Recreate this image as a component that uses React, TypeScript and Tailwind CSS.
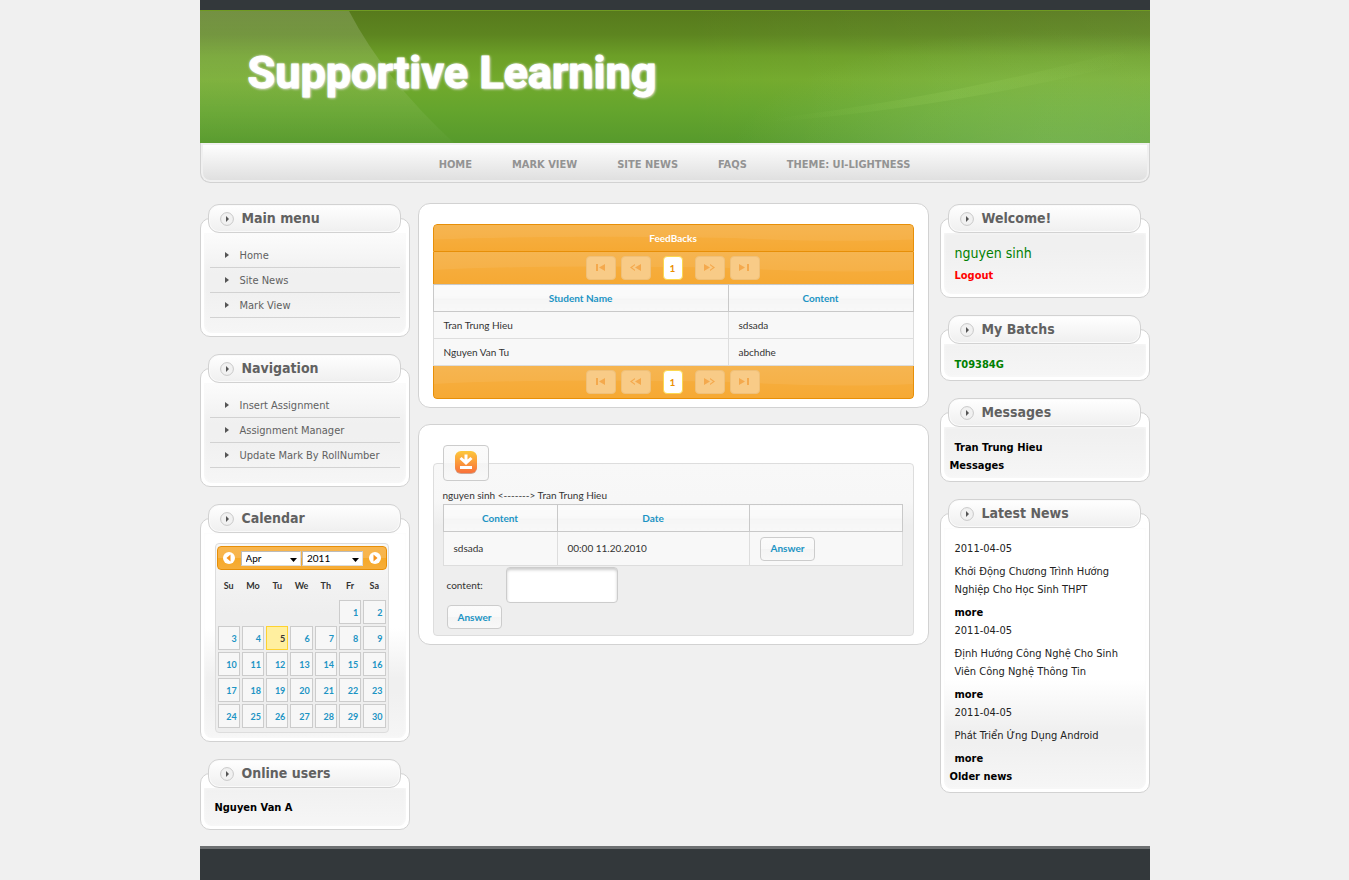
import type { ReactNode } from "react";

const navItems = ["HOME", "MARK VIEW", "SITE NEWS", "FAQS", "THEME: UI-LIGHTNESS"];
const mainMenu = ["Home", "Site News", "Mark View"];
const navigation = ["Insert Assignment", "Assignment Manager", "Update Mark By RollNumber"];
const weekdays = ["Su", "Mo", "Tu", "We", "Th", "Fr", "Sa"];
const weeks = [0, 1, 2, 3, 4].map((w) => weekdays.map((_, d) => w * 7 + d - 4));
const feedbacks = [
  { student: "Tran Trung Hieu", content: "sdsada" },
  { student: "Nguyen Van Tu", content: "abchdhe" },
];
const news = [
  { date: "2011-04-05", title: "Khởi Động Chương Trình Hướng Nghiệp Cho Học Sinh THPT" },
  { date: "2011-04-05", title: "Định Hướng Công Nghệ Cho Sinh Viên Công Nghệ Thông Tin" },
  { date: "2011-04-05", title: "Phát Triển Ứng Dụng Android" },
];

function Panel({ title, className = "", children }: { title: string; className?: string; children: ReactNode }) {
  return (
    <section>
      <h2 className="relative z-10 ml-2 mr-[9px] flex h-[29px] items-center rounded-[11px] border border-[#d2d2d2] bg-linear-to-b from-white to-[#efefef] pl-[11px] text-[14px] font-bold text-[#616161] shadow-[inset_0_0_0_1px_#fafafa]">
        <svg width="14" height="14" viewBox="0 0 14 14" className="mr-2 shrink-0" aria-hidden="true">
          <circle cx="7" cy="7" r="6.4" fill="#f1f1f1" stroke="#c8c8c8" />
          <path d="M6 4l3 3-3 3z" fill="#555" />
        </svg>
        {title}
      </h2>
      <div className="-mt-[15px] rounded-[10px] border border-[#d2d2d2] bg-white px-[3px] pt-[14px] pb-[3px]">
        <div className={"rounded-b-lg bg-[linear-gradient(to_top,#f6f6f6_0,#f0f0f0_45px,#f0f0f0_60px,#ffffff_110px)] text-[11px] leading-[18px] shadow-[inset_0_0_3px_#fafafa] " + className}>
          {children}
        </div>
      </div>
    </section>
  );
}

function Menu({ items }: { items: string[] }) {
  return (
    <ul className="mx-[6px]">
      {items.map((item) => (
        <li key={item} className="flex h-[25px] items-center border-b border-[#d2d2d2] pt-[2px] pl-[15px]">
          <svg width="4" height="6" viewBox="0 0 4 6" className="mr-[11px] -mt-[2px]" aria-hidden="true">
            <path d="M0 0l4 3-4 3z" fill="#555" />
          </svg>
          <a href="#" className="text-[#616161]">{item}</a>
        </li>
      ))}
    </ul>
  );
}

function CalendarArrow({ label, d }: { label: string; d: string }) {
  return (
    <button type="button" aria-label={label} className="shrink-0">
      <svg width="12" height="12" viewBox="0 0 12 12">
        <circle cx="6" cy="6" r="6" fill="#fff" />
        <path d={d} fill="#f6931f" />
      </svg>
    </button>
  );
}

function CalendarSelect({ label, value }: { label: string; value: string }) {
  return (
    <span className="relative flex min-w-0 flex-1">
      <select aria-label={label} defaultValue={value} className="h-[15px] w-full appearance-none border border-[#bbb] border-r-[#ddd] border-b-[#ddd] bg-white pl-1 text-[10px] leading-[13px] text-black">
        <option>{value}</option>
      </select>
      <svg width="7" height="4" viewBox="0 0 7 4" className="pointer-events-none absolute right-1 bottom-1" aria-hidden="true">
        <path d="M0 0h7L3.500 4z" fill="#000" />
      </svg>
    </span>
  );
}

function Calendar() {
  return (
    <div className="ml-[11px] mr-[17px] rounded border border-[#dddddd] bg-[linear-gradient(#f8f8f8_0,#eeeeee_70px)] p-[1px] pt-[2px] pb-[3px] font-[Lato,'Trebuchet_MS',sans-serif] text-[10px] text-[#333]">
      <div className="flex h-[24px] items-center gap-[6px] rounded border border-[#e78f08] bg-[linear-gradient(#f8b64f_0,#f7b44b_50%,#f6a828_51%,#f6ae3a)] px-[5px]">
        <CalendarArrow label="Previous month" d="M7.500 2.500v7l-4-3.500z" />
        <div className="flex min-w-0 flex-1 gap-px">
          <CalendarSelect label="Month" value="Apr" />
          <CalendarSelect label="Year" value="2011" />
        </div>
        <CalendarArrow label="Next month" d="M4.500 2.500v7l4-3.500z" />
      </div>
      <table className="w-full table-fixed border-collapse">
        <thead>
          <tr className="h-[29px]">
            {weekdays.map((d) => (
              <th key={d} className="px-0 pt-[2px] pb-0 text-center text-[9px]">{d}</th>
            ))}
          </tr>
        </thead>
        <tbody>
          {weeks.map((week) => (
            <tr key={week[0]} className="h-[26px]">
              {week.map((day) => (
                <td key={day} className="p-px">
                  {day > 0 && (
                    <a
                      href="#"
                      className={
                        "block h-[24px] border pr-[2px] text-right text-[9px] leading-[24px] font-bold " +
                        (day === 5
                          ? "border-[#fed22f] bg-[#ffef9f] text-[#363636]"
                          : "border-[#cccccc] bg-[#f7f7f7] text-[#1c94c4]")
                      }
                    >
                      {day}
                    </a>
                  )}
                </td>
              ))}
            </tr>
          ))}
        </tbody>
      </table>
    </div>
  );
}

function Gloss() {
  return (
    <svg viewBox="0 0 480 34" preserveAspectRatio="none" className="absolute inset-0 h-full w-full" aria-hidden="true">
      <path d="M0 0H480V19Q400 23 300 17Q120 13 0 19z" fill="#fff" opacity="0.07" />
    </svg>
  );
}

function Pager() {
  const icons = [
    { label: "First", d: "M1 0h2v7H1zM10 0v7L4 3.500z" },
    { label: "Previous", d: "M5 0v1.200L2 3.500l3 2.300V7L0 3.500zM11 0v7L5 3.500z" },
    { label: "Next", d: "M0 0v7l6-3.500zM6 0v1.200L9 3.500 6 5.800V7l5-3.500z" },
    { label: "Last", d: "M0 0v7l6-3.500zM8 0h2v7H8z" },
  ];
  const step = (i: number) => (
    <button key={i} type="button" disabled aria-label={icons[i].label} className="flex h-[24px] w-[30px] items-center justify-center rounded-[4px] border border-[#efc079] bg-[#f8cb87] pb-px">
      <svg width="11" height="7" viewBox="0 0 11 7">
        <path d={icons[i].d} fill="#f4a94d" />
      </svg>
    </button>
  );
  return (
    <div className="relative flex h-full items-center justify-center gap-[5px] pr-px">
      {step(0)}
      {step(1)}
      <button type="button" className="mx-[7px] h-[24px] w-[20px] rounded-[4px] border border-[#fbd850] bg-white text-[10px] font-bold text-[#eb8f00]">1</button>
      {step(2)}
      {step(3)}
    </div>
  );
}

const orange = "relative border-[#e78f08] bg-linear-to-b from-[#f6b044] to-[#f6a933]";
const headCell = "h-[27px] border border-[#c9c9c9] bg-[linear-gradient(#fbfbfb_0,#f9f9f9_50%,#f5f5f5_51%,#f8f8f8)] p-0 text-center font-bold text-[#1c94c4]";
const bodyCell = "h-[27px] border border-[#dddddd] bg-[#f8f8f8] px-[10px] py-0";
const actionButton = "h-[24px] rounded-[4px] border border-[#cccccc] bg-[linear-gradient(#fbfbfb_0,#f9f9f9_50%,#f4f4f4_51%,#f8f8f8)] px-[10px] text-[10px] font-bold text-[#1c94c4]";
const box = "rounded-[12px] border border-[#d2d2d2] bg-white px-[14px] pt-5 pb-2";

export default function App() {
  return (
    <div className="flex min-h-screen flex-col bg-[#f0f0f0] font-['DejaVu_Sans_Condensed',Tahoma,sans-serif] text-[11px] text-[#222]">
      <div className="mx-auto flex w-full max-w-[950px] flex-1 flex-col">
        <header>
          <div className="h-[10px] bg-[#33383b]" />
          <div className="relative flex h-[133px] items-center overflow-hidden border-t border-[#6f9a22] bg-[linear-gradient(#577a1c_0,#5d8520_18%,#6c9f27_34%,#73aa2c_52%,#65a52d_74%,#579a2c)] pb-2 pl-12">
            <svg viewBox="0 0 950 133" preserveAspectRatio="none" className="absolute inset-0 h-full w-full" aria-hidden="true">
              <defs>
                <linearGradient id="leftShine" x1="0" y1="0" x2="0" y2="1">
                  <stop offset="0" stopColor="#fff" stopOpacity="0.17" />
                  <stop offset="0.6" stopColor="#fff" stopOpacity="0.08" />
                  <stop offset="1" stopColor="#fff" stopOpacity="0.02" />
                </linearGradient>
                <radialGradient id="rightShine" gradientUnits="userSpaceOnUse" cx="860" cy="150" r="330" gradientTransform="translate(0 90) scale(1 0.4)">
                  <stop offset="0" stopColor="#94d070" stopOpacity="0.42" />
                  <stop offset="0.5" stopColor="#94d070" stopOpacity="0.25" />
                  <stop offset="1" stopColor="#94d070" stopOpacity="0" />
                </radialGradient>
                <linearGradient id="ridge" x1="0" y1="0" x2="1" y2="0">
                  <stop offset="0" stopColor="#a5dc60" stopOpacity="0" />
                  <stop offset="0.5" stopColor="#a5dc60" stopOpacity="0.16" />
                  <stop offset="1" stopColor="#a5dc60" stopOpacity="0" />
                </linearGradient>
                <linearGradient id="sideShine" x1="0" y1="0" x2="1" y2="0">
                  <stop offset="0" stopColor="#fff" stopOpacity="0" />
                  <stop offset="1" stopColor="#fff" stopOpacity="0.06" />
                </linearGradient>
              </defs>
              <path d="M0 0H149Q184 68 254 133H0z" fill="url(#leftShine)" />
              <path d="M480 0H950V133H480z" fill="url(#rightShine)" />
              <path d="M570 109Q760 85 930 38V52Q760 96 570 112z" fill="url(#ridge)" />
              <path d="M480 0H950V133H480z" fill="url(#sideShine)" />
            </svg>
            <h1 className="relative font-[Roboto,sans-serif] text-[45px] leading-[52px] font-bold text-white [-webkit-text-stroke:1px_white] [text-shadow:1px_1px_3px_#e3dcdc,0_0_3px_#fff]">
              Supportive Learning
            </h1>
          </div>
          <nav className="flex h-[40px] items-center justify-center gap-[40px] rounded-b-[10px] border border-t-0 border-[#d2d2d2] bg-linear-to-b from-white to-[#dedede] pt-[5px] shadow-[inset_0_0_0_2px_#f0f0f0]">
            {navItems.map((item) => (
              <a key={item} href="#" className="font-bold text-[#939393]">{item}</a>
            ))}
          </nav>
        </header>

        <main className="grid grid-cols-[210px_minmax(0,1fr)_210px] items-start pt-5 pb-4">
          <div className="flex flex-col gap-[17px] pt-px">
            <Panel title="Main menu" className="pt-[10px] pb-[15px]">
              <Menu items={mainMenu} />
            </Panel>
            <Panel title="Navigation" className="pt-[10px] pb-[15px]">
              <Menu items={navigation} />
            </Panel>
            <Panel title="Calendar" className="pt-[10px] pb-[5px]">
              <Calendar />
            </Panel>
            <Panel title="Online users" className="px-[11px] pt-[11px] pb-[9px]">
              <a href="#" className="block font-bold text-black">Nguyen Van A</a>
            </Panel>
          </div>

          <div className="ml-2 mr-[11px] flex flex-col gap-4 font-[Lato,'Trebuchet_MS',sans-serif] text-[10px] text-[#333]">
            <section className={box}>
              <div className="overflow-hidden rounded-[4px]">
                <div className={orange + " flex h-[28px] items-center justify-center rounded-t-[4px] border font-bold text-white"}>
                  <Gloss />
                  <h2 className="relative">FeedBacks</h2>
                </div>
                <div className={orange + " h-[32px] border-x"}>
                  <Gloss />
                  <Pager />
                </div>
                <table className="w-full table-fixed border-collapse">
                  <colgroup>
                    <col className="w-[295px]" />
                    <col />
                  </colgroup>
                  <thead>
                    <tr>
                      <th className={headCell}>Student Name</th>
                      <th className={headCell}>Content</th>
                    </tr>
                  </thead>
                  <tbody>
                    {feedbacks.map((f) => (
                      <tr key={f.student}>
                        <td className={bodyCell}>{f.student}</td>
                        <td className={bodyCell}>{f.content}</td>
                      </tr>
                    ))}
                  </tbody>
                </table>
                <div className={orange + " h-[33px] rounded-b-[4px] border-x border-b"}>
                  <Gloss />
                  <Pager />
                </div>
              </div>
            </section>

            <section className={box}>
              <fieldset className="rounded-[4px] border border-[#dddddd] bg-[linear-gradient(#f8f8f8_0,#f7f7f7_36px,#eeeeee_62px)] pr-[10px] pb-[6px] pl-[9px]">
                <legend className="block p-0">
                  <button type="button" aria-label="Download" className="flex h-[36px] w-[46px] items-center justify-center rounded-[4px] border border-[#cccccc] bg-[linear-gradient(#fbfbfb_0,#f9f9f9_50%,#f4f4f4_51%,#f8f8f8)] pb-px">
                    <svg width="22" height="23" viewBox="0 0 22 23">
                      <defs>
                        <linearGradient id="download" x1="0" y1="0" x2="0" y2="1">
                          <stop offset="0" stopColor="#fdc83c" />
                          <stop offset="1" stopColor="#f9703a" />
                        </linearGradient>
                      </defs>
                      <rect y="1" width="22" height="22" rx="6" fill="#cfa58f" />
                      <rect width="22" height="22" rx="6" fill="url(#download)" />
                      <path d="M9.500 3.500h3v5l3-2.500 2 2L11 14 4.500 8l2-2 3 2.500zM5 15h12v3H5z" fill="#fff" />
                    </svg>
                  </button>
                </legend>
                <p className="pt-[6px] leading-[16px]">nguyen sinh &lt;-------&gt; Tran Trung Hieu</p>
                <table className="mt-px w-full table-fixed border-collapse">
                  <colgroup>
                    <col className="w-[114px]" />
                    <col className="w-[192px]" />
                    <col />
                  </colgroup>
                  <thead>
                    <tr>
                      <th className={headCell}>Content</th>
                      <th className={headCell}>Date</th>
                      <th className={headCell} aria-label="Actions" />
                    </tr>
                  </thead>
                  <tbody>
                    <tr className="h-[34px]">
                      <td className={bodyCell}>sdsada</td>
                      <td className={bodyCell}>00:00 11.20.2010</td>
                      <td className={bodyCell}>
                        <button type="button" className={actionButton + " block"}>Answer</button>
                      </td>
                    </tr>
                  </tbody>
                </table>
                <form className="pt-px pl-1" onSubmit={(e) => e.preventDefault()}>
                  <div className="flex items-center">
                    <label htmlFor="content" className="w-[59px]">content:</label>
                    <textarea id="content" className="block h-[36px] w-[112px] resize-none rounded-[4px] border border-[#cccccc] bg-white p-1 shadow-[inset_0_2px_3px_#cccccc]" />
                  </div>
                  <button type="submit" className={actionButton + " mt-[2px] block"}>Answer</button>
                </form>
              </fieldset>
            </section>
          </div>

          <div className="flex flex-col gap-[17px] pt-px">
            <Panel title="Welcome!" className="px-[11px] pt-[11px] pb-[9px]">
              <p className="mb-[5px] text-[14px] text-[#008000]">nguyen sinh</p>
              <a href="#" className="block font-bold text-[#f00]">Logout</a>
            </Panel>
            <Panel title="My Batchs" className="px-[11px] pt-3 pb-[3px]">
              <a href="#" className="block font-bold text-[#008000]">T09384G</a>
            </Panel>
            <Panel title="Messages" className="px-[6px] pt-3 pb-[3px]">
              <a href="#" className="block pl-[5px] font-bold text-black">Tran Trung Hieu</a>
              <a href="#" className="block font-bold text-black">Messages</a>
            </Panel>
            <Panel title="Latest News" className="px-[6px] pt-3 pb-[3px]">
              {news.map((n) => (
                <article key={n.title} className="px-[5px]">
                  <time dateTime={n.date}>{n.date}</time>
                  <p className="my-[5px]">{n.title}</p>
                  <a href="#" className="block font-bold text-black">more</a>
                </article>
              ))}
              <a href="#" className="block font-bold text-black">Older news</a>
            </Panel>
          </div>
        </main>

        <footer className="flex-1 border-t-[3px] border-[#6d7072] bg-[#33383b]" />
      </div>
    </div>
  );
}
